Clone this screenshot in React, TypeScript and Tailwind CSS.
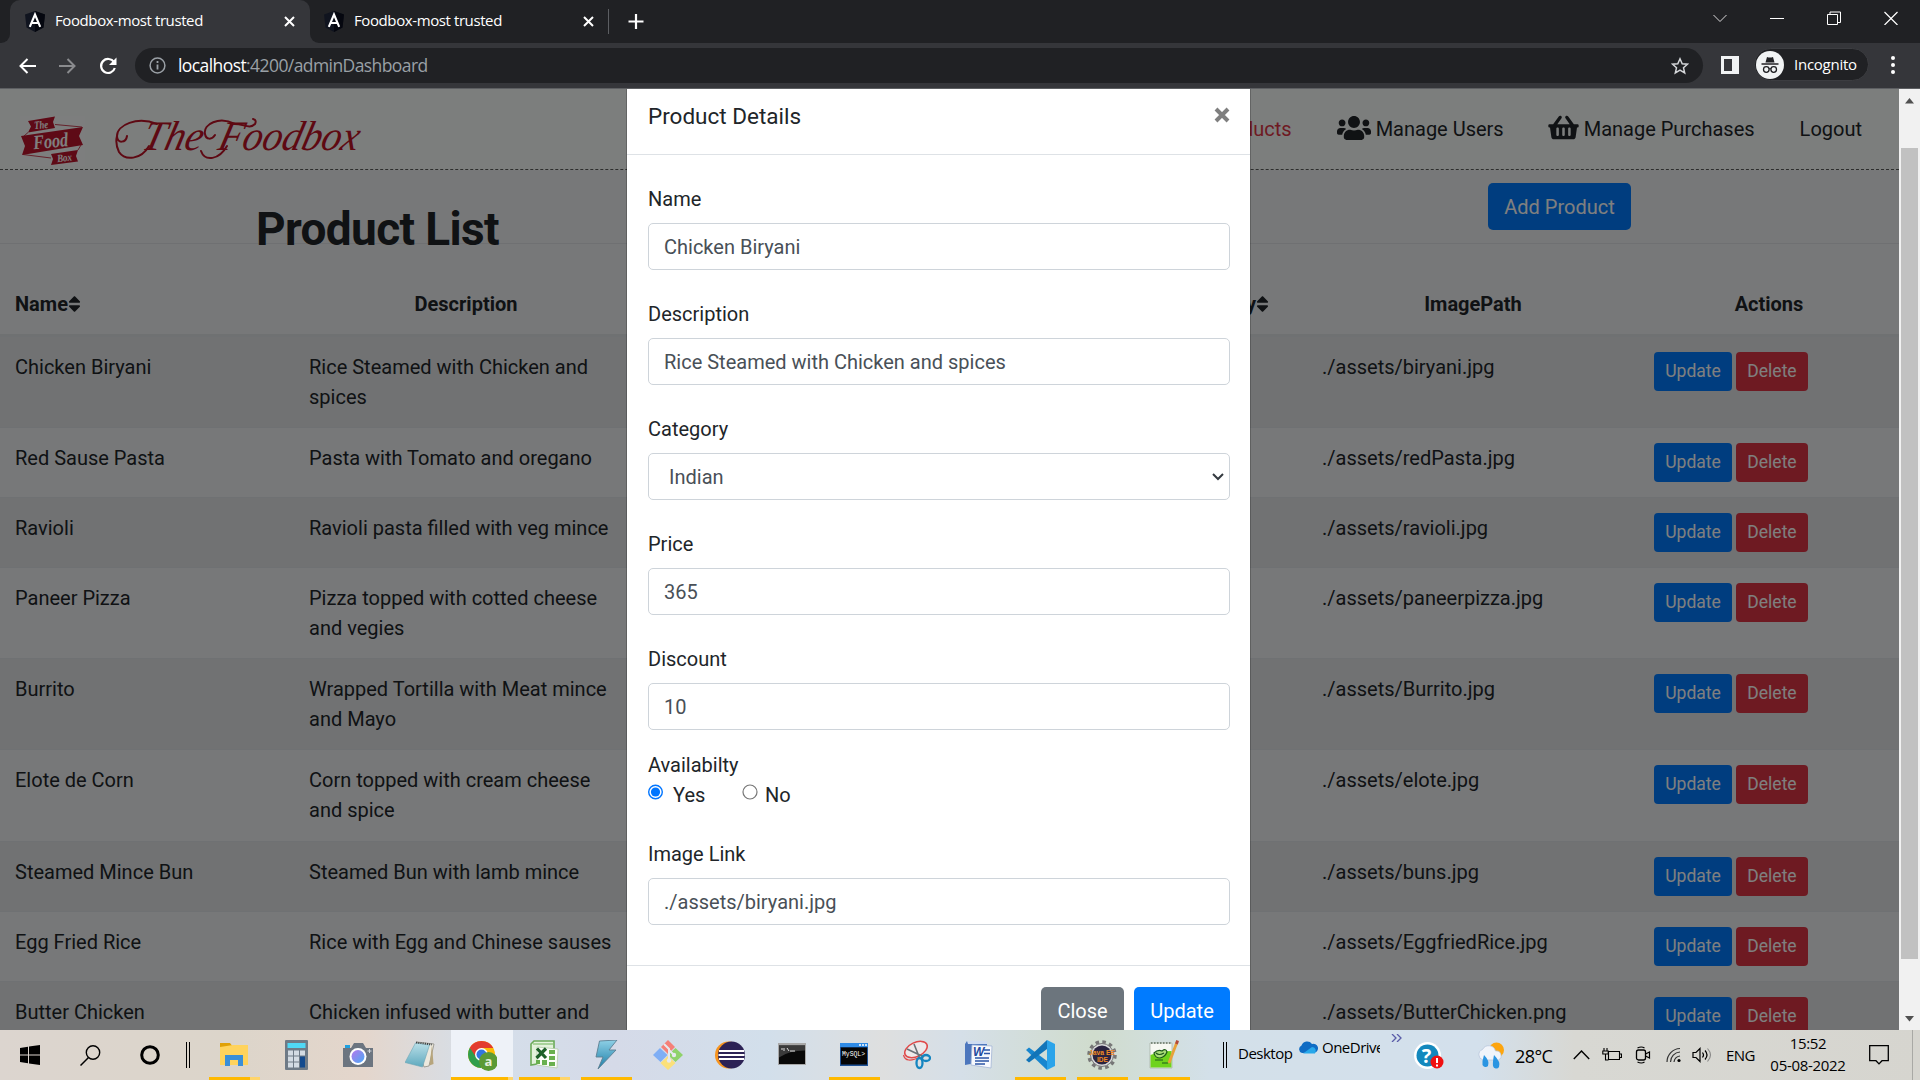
import React from "react";
import { FaUsers, FaShoppingBasket, FaSort } from "react-icons/fa";

const rows = [
  ["Chicken Biryani", "Rice Steamed with Chicken and spices", "./assets/biryani.jpg"],
  ["Red Sause Pasta", "Pasta with Tomato and oregano", "./assets/redPasta.jpg"],
  ["Ravioli", "Ravioli pasta filled with veg mince", "./assets/ravioli.jpg"],
  ["Paneer Pizza", "Pizza topped with cotted cheese and vegies", "./assets/paneerpizza.jpg"],
  ["Burrito", "Wrapped Tortilla with Meat mince and Mayo", "./assets/Burrito.jpg"],
  ["Elote de Corn", "Corn topped with cream cheese and spice", "./assets/elote.jpg"],
  ["Steamed Mince Bun", "Steamed Bun with lamb mince", "./assets/buns.jpg"],
  ["Egg Fried Rice", "Rice with Egg and Chinese sauses", "./assets/EggfriedRice.jpg"],
  ["Butter Chicken", "Chicken infused with butter and cream", "./assets/ButterChicken.png"],
];

function AngularIcon() {
  return (
    <svg width="20" height="21" viewBox="0 0 20 21" className="shrink-0">
      <path d="M10 0 20 3.5 18.5 16.5 10 21 1.500 16.500 0 3.500Z" fill="#10141f" />
      <path d="M10 0v21l8.500-4.500L20 3.500Z" fill="#05070f" />
      <path d="M4.800 15.800 10 3.500l5.200 12.300M6.800 12h6.400" stroke="#fff" strokeWidth="2.100" fill="none" />
    </svg>
  );
}

function CloseX() {
  return (
    <svg width="11" height="11" viewBox="0 0 11 11" className="shrink-0">
      <path d="M1 1l9 9M10 1l-9 9" stroke="#fff" strokeWidth="2" />
    </svg>
  );
}

function BrowserChrome() {
  return (
    <div className="h-[89px] shrink-0 bg-[#202124] text-white font-['Open_Sans',sans-serif]">
      <div className="flex h-[43px]">
        <div className="flex w-[10px] items-end bg-[#35363a]">
          <div className="h-full w-full rounded-br-[9px] bg-[#202124]" />
        </div>
        <div className="flex w-[300px] items-center rounded-t-[10px] bg-[#35363a] pb-px pl-[15px] pr-[15px]">
          <AngularIcon />
          <span className="-mt-[2px] ml-[10px] grow whitespace-nowrap text-[15px] tracking-[-0.4px]">Foodbox-most trusted</span>
          <CloseX />
        </div>
        <div className="flex w-[299px] bg-[#35363a]">
          <div className="flex w-full items-center rounded-bl-[9px] bg-[#202124] pb-px pl-[14px] pr-[15px]">
            <AngularIcon />
            <span className="-mt-[2px] ml-[10px] grow whitespace-nowrap text-[15px] tracking-[-0.4px]">Foodbox-most trusted</span>
            <CloseX />
            <div className="-mr-[15px] ml-[14px] h-[25px] w-px bg-[#5c5e62]" />
          </div>
        </div>
        <svg width="16" height="16" viewBox="0 0 16 16" className="ml-[19px] mt-[14px]">
          <path d="M8 0v15M.5 7.500h15" stroke="#fff" strokeWidth="2.200" />
        </svg>
        <div className="flex grow items-start justify-end gap-[43px] pr-[22px] pt-[11px]">
          <svg width="14" height="14" viewBox="0 0 14 14"><path d="M.5 4 7 10.500 13.500 4" stroke="#dadada" fill="none" /></svg>
          <svg width="14" height="14" viewBox="0 0 14 14"><path d="M0 7.500h14" stroke="#fff" /></svg>
          <svg width="14" height="15" viewBox="0 0 14 15"><path d="M.5 3.500h10v10H.500zM3 3.500V1h10.500v10.500H11" stroke="#fff" fill="none" /></svg>
          <svg width="14" height="14" viewBox="0 0 14 14"><path d="M.5 1l13 13M13.500 1l-13 13" stroke="#fff" strokeWidth="1.200" /></svg>
        </div>
      </div>
      <div className="flex h-[46px] items-start border-b border-[#5d5f62] bg-[#35363a] pt-[5px]">
        <div className="flex h-[35px] w-[135px] items-center pl-[19px]">
          <svg width="17" height="16" viewBox="0 0 17 16"><path d="M17 8H1.800M8.500 1 1.500 8l7 7" stroke="#fff" strokeWidth="2" fill="none" /></svg>
          <svg width="17" height="16" viewBox="0 0 17 16" className="ml-[23px]"><path d="M0 8h15.200M8.500 1l7 7-7 7" stroke="#8a8b8e" strokeWidth="2" fill="none" /></svg>
          <svg width="19" height="18" viewBox="0 0 19 18" className="ml-[23px]"><path d="M15 5.200A7 7 0 1 0 15.800 11" stroke="#fff" strokeWidth="2.200" fill="none" /><path d="M17.500 .5v7.500H10Z" fill="#fff" /></svg>
        </div>
        <div className="flex h-[35px] w-[1568px] items-center rounded-full bg-[#202124] pl-[14px] pr-[14px]">
          <svg width="17" height="17" viewBox="0 0 17 17"><circle cx="8.500" cy="8.500" r="7.400" stroke="#9aa0a6" strokeWidth="1.500" fill="none" /><path d="M8.500 7.500v5M8.500 4v2" stroke="#9aa0a6" strokeWidth="1.800" /></svg>
          <span className="ml-[12px] grow text-[17.5px] tracking-[-0.58px] text-[#9aa0a6]"><span className="text-white">localhost</span>:4200/adminDashboard</span>
          <svg width="18" height="18" viewBox="0 0 18 18"><path d="M9 1.800l2.200 4.900 5.300.5-4 3.600 1.200 5.200L9 13.200 4.300 16l1.200-5.200-4-3.600 5.300-.5Z" stroke="#d5d7da" strokeWidth="1.500" fill="none" /></svg>
        </div>
        <svg width="18" height="18" viewBox="0 0 18 18" className="ml-[18px] mt-[8px]"><path d="M0 0h18v18H0zM3 3v12h8V3z" fill="#f1f3f4" fillRule="evenodd" /></svg>
        <div className="ml-[15px] flex h-[33px] w-[115px] items-center rounded-full border border-[#3c3d41] bg-[#202124] pl-px">
          <svg width="28" height="28" viewBox="0 0 28 28">
            <circle cx="14" cy="14" r="14" fill="#f1f3f4" />
            <path d="M9.500 11.500 11 6q3 1 6 0l1.500 5.500Z" fill="#202124" />
            <path d="M5.500 13h17" stroke="#202124" strokeWidth="1.500" />
            <circle cx="10.300" cy="18.500" r="2.800" stroke="#202124" strokeWidth="1.300" fill="none" />
            <circle cx="17.700" cy="18.500" r="2.800" stroke="#202124" strokeWidth="1.300" fill="none" />
            <path d="M13 18q1-1 2 0" stroke="#202124" fill="none" />
          </svg>
          <span className="ml-[10px] text-[15px] tracking-[-0.25px]">Incognito</span>
        </div>
        <svg width="4" height="18" viewBox="0 0 4 18" className="ml-[22px] mt-[8px]"><circle cx="2" cy="2" r="2" fill="#fff" /><circle cx="2" cy="9" r="2" fill="#fff" /><circle cx="2" cy="16" r="2" fill="#fff" /></svg>
      </div>
    </div>
  );
}

function FoodBoxLogo() {
  return (
    <svg width="65" height="50" viewBox="0 0 65 50" className="block">
      <rect width="65" height="50" fill="#fff" fillOpacity=".35" />
      <path d="M8 5 35 .5l-2 5.500 2 6L8 16.500l3-6Z" fill="#bd142c" />
      <path d="M1 20 63 11l-4 9 4 9-61 10 3-9Z" fill="#bd142c" />
      <path d="M31 38l27-4-2 6 2 5.500L31 49l2-6Z" fill="#bd142c" />
      <path d="M35 8.500 62 11M8 16.500l-4 3.500M3 38.500l28 3.500M58 34l3-5" stroke="#bd142c" strokeWidth=".8" />
      <g fill="#fff" fontFamily="Liberation Serif" fontStyle="italic" fontWeight="bold">
        <text x="14" y="12.500" fontSize="11" textLength="14" lengthAdjust="spacingAndGlyphs" transform="rotate(-5 21 8)">The</text>
        <text x="13" y="31.500" fontSize="20" textLength="35" lengthAdjust="spacingAndGlyphs" transform="rotate(-5 32 24)">Food</text>
        <text x="37" y="45.500" fontSize="11" textLength="15" lengthAdjust="spacingAndGlyphs" transform="rotate(-6 44 42)">Box</text>
      </g>
    </svg>
  );
}

function Wordmark() {
  return (
    <svg width="254" height="60" viewBox="0 0 254 60" className="block overflow-visible">
      <g fill="#bd1226" fontFamily="Liberation Serif" fontStyle="italic">
        <text x="30" y="42" fontSize="42" textLength="60" lengthAdjust="spacingAndGlyphs" transform="skewX(-14) translate(6 0)">The</text>
        <text x="108" y="42" fontSize="42" textLength="140" lengthAdjust="spacingAndGlyphs" transform="skewX(-14) translate(4 0)">Foodbox</text>
      </g>
      <path d="M42 16C22 8 2 17 2 28c0 8 9 7 10 0M34 38C26 52 10 53 4 44Q0 36 2 28M120 16C104 8 88 16 90 26c1 6 7 6 10 1M112 38c-8 14-22 16-26 5M118 16c10-1 16 6 22 0q2-4-2-5" stroke="#bd1226" strokeWidth="2" fill="none" strokeLinecap="round" />
    </svg>
  );
}

function Navbar() {
  return (
    <div className="flex h-[81px] shrink-0 border-b border-dashed border-[#5a5c5a] bg-[#f9fcfa] pr-[37px] text-[20px] leading-[30px] text-[#212529]">
      <div className="pl-[20px] pt-[27px]"><FoodBoxLogo /></div>
      <div className="ml-[30px] pt-[19px]"><Wordmark /></div>
      <div className="flex h-[80px] grow items-center justify-end whitespace-nowrap">
        <span className="text-[#dc3545]">Manage Products</span>
        <span className="ml-[45px] flex items-center"><FaUsers className="mr-[5px] -mt-[3px] h-[28px] w-[34px]" />Manage Users</span>
        <span className="ml-[44px] flex items-center"><FaShoppingBasket className="mr-[5px] -mt-[3px] h-[27px] w-[31px]" />Manage Purchases</span>
        <span className="ml-[45px]">Logout</span>
      </div>
    </div>
  );
}

function ProductTable() {
  return (
    <table className="w-[1899px] table-fixed border-collapse text-left text-[20px] leading-[30px] text-[#212529]">
      <colgroup>
        <col className="w-[294px]" /><col className="w-[344px]" /><col className="w-[669px]" /><col className="w-[332px]" /><col className="w-[260px]" />
      </colgroup>
      <thead>
        <tr className="h-[90px] align-middle font-bold">
          <th className="px-[15px] pb-0 pt-[29px]"><span className="flex items-center">Name<FaSort className="h-[20px] w-[13px]" /></span></th>
          <th className="pt-[29px] text-center">Description</th>
          <th className="pt-[29px] pr-[38px]"><span className="flex items-center justify-end">Availability<FaSort className="h-[20px] w-[13px]" /></span></th>
          <th className="pt-[29px] text-center">ImagePath</th>
          <th className="pt-[29px] text-center">Actions</th>
        </tr>
      </thead>
      <tbody>
        <tr className="h-[2px] bg-[#dfe2e5]"><td colSpan={5} /></tr>
        {rows.map((r, i) => (
          <tr key={r[0]} className={i % 2 === 0 ? "bg-black/5 align-top" : "align-top"}>
            <td className="border-t border-[#dee2e6] p-[15px]">{r[0]}</td>
            <td className={i === 5 ? "border-t border-[#dee2e6] p-[15px] pb-[16px]" : "border-t border-[#dee2e6] p-[15px]"}>{r[1]}</td>
            <td className="border-t border-[#dee2e6] p-[15px]" />
            <td className="border-t border-[#dee2e6] p-[15px]">{r[2]}</td>
            <td className="border-t border-[#dee2e6] p-[15px]">
              <div className="flex gap-[4px] text-[17.5px] leading-[26px] text-white">
                <button className="h-[39px] w-[78px] rounded-[4px] bg-[#007bff]">Update</button>
                <button className="h-[39px] w-[72px] rounded-[4px] bg-[#dc3545]">Delete</button>
              </div>
            </td>
          </tr>
        ))}
      </tbody>
    </table>
  );
}

function Field({ label, value, select }: { label: string; value: string; select?: boolean }) {
  return (
    <div className="mb-[29px]">
      <div className="mb-[9px] h-[30px] text-[#212529]">{label}</div>
      <div className={select ? "flex h-[47px] items-center justify-between rounded-[5px] border border-[#ced4da] pl-[20px] pr-[5px] text-[#495057]" : "flex h-[47px] items-center rounded-[5px] border border-[#ced4da] px-[15px] text-[#495057]"}>
        {value}
        {select && <svg width="12" height="8" viewBox="0 0 12 8"><path d="M1 1l5 5 5-5" stroke="#343a40" strokeWidth="2" fill="none" /></svg>}
      </div>
    </div>
  );
}

function ProductModal() {
  return (
    <div className="w-[625px] border-x border-black/20 bg-white bg-clip-padding text-[20px] leading-[30px] text-[#212529]">
      <div className="flex h-[66px] justify-between border-b border-[#dee2e6] pl-[21px] pr-[20px] pt-[8px]">
        <span className="text-[22.5px] leading-[38px]">Product Details</span>
        <svg width="16" height="16" viewBox="0 0 16 16" className="mt-[10px]"><path d="M2 2l12 12M14 2 2 14" stroke="#7f7f7f" strokeWidth="4" /></svg>
      </div>
      <div className="pl-[21px] pr-[20px] pt-[29px]">
        <Field label="Name" value="Chicken Biryani" />
        <Field label="Description" value="Rice Steamed with Chicken and spices" />
        <Field label="Category" value="Indian" select />
        <Field label="Price" value="365" />
        <Field label="Discount" value="10" />
        <div className="-mt-[9px] h-[30px]">Availabilty</div>
        <div className="mb-[29px] flex h-[30px]">
          <svg width="16" height="16" viewBox="0 0 16 16" className="mt-[4px]"><circle cx="7.500" cy="8" r="6.800" stroke="#0075ff" strokeWidth="1.400" fill="#fff" /><circle cx="7.500" cy="8" r="4.600" fill="#0075ff" /></svg>
          <span className="ml-[9px] w-[69px]">Yes</span>
          <svg width="16" height="16" viewBox="0 0 16 16" className="mt-[4px]"><circle cx="8" cy="8" r="7" stroke="#767676" strokeWidth="1.200" fill="#fff" /></svg>
          <span className="ml-[7px]">No</span>
        </div>
        <Field label="Image Link" value="./assets/biryani.jpg" />
      </div>
      <div className="mt-[40px] flex justify-end gap-[10px] border-t border-[#dee2e6] pr-[20px] pt-[21px] text-white">
        <button className="h-[47px] w-[83px] rounded-[5px] bg-[#6c757d]">Close</button>
        <button className="h-[47px] w-[96px] rounded-[5px] bg-[#007bff]">Update</button>
      </div>
    </div>
  );
}

const icons: { w: string; el: React.ReactNode }[] = [
  { w: "split", el: <><path d="M1 3h10l3 4H1z" fill="#e0a106" /><path d="M1 7 14 5h15v20H1z" fill="#ffd35c" /><path d="M6 26V15h18v11h-5v-6h-8v6z" fill="#3a8fd8" /></> },
  { w: "", el: <><rect x="4" width="23" height="30" rx="1" fill="#6e7a86" /><path d="M6.500 3h18v5h-18z" fill="#4fd8f5" /><path d="M7 10.500h5v5H7zM13 10.500h5v5h-5zM19 10.500h5v5h-5zM7 16.500h5v5H7zM13 16.500h5v5h-5zM7 22.500h5v5H7zM13 22.500h5v5h-5z" fill="#d3dbe3" /><path d="M19 16.500h5v11h-5z" fill="#134a8e" /></> },
  { w: "", el: <><path d="M0 8h8l3-5h9l3 5h7v19H0z" fill="#6c7580" /><path d="M2 5h5v3H2z" fill="#1fa0e0" /><path d="M26.500 9v4M24.500 11h4" stroke="#d0d5da" /><circle cx="15" cy="16.500" r="8.500" fill="#fff" /><circle cx="15" cy="16.500" r="6.500" fill="url(#lens)" /></> },
  { w: "", el: <><path d="M12 2 29 4l-5 22-5 1z" fill="#ece9de" stroke="#8f8d84" strokeWidth=".8" /><path d="M27 5l1.500 19-4 1.500z" fill="#b7a57c" /><path d="M10.500 3 24.500 5 17.500 27 0 22.500z" fill="url(#sheet)" stroke="#6ea6b6" strokeWidth=".6" /><path d="M11 2.500l16 2" stroke="#3f4447" strokeWidth="1.800" strokeDasharray="1.200 1" /></> },
  { w: "active", el: <><circle cx="14.500" cy="14.500" r="13.500" fill="#fbbc05" /><path d="M2.800 7.800A13.500 13.500 0 0 0 14 28L20 17.500 14.500 14.500Z" fill="#2f9e4c" /><path d="M14.500 8h11.800A13.500 13.500 0 0 0 2.800 7.800L9 17Z" fill="#e33b2e" /><circle cx="14.500" cy="14.500" r="6.500" fill="#fff" /><circle cx="14.500" cy="14.500" r="5" fill="#3376e0" /><circle cx="21.500" cy="21.500" r="9.500" fill="#5b9a35" /><text x="21.500" y="26" fill="#e6f0dc" fontSize="13" fontWeight="bold" fontFamily="Open Sans" textAnchor="middle">a</text></> },
  { w: "split", el: <><path d="M5 1h20v20L2 25V4z" fill="#e3f2dc" stroke="#6bab58" strokeWidth="1.600" /><path d="M4 4h20" stroke="#a8d29a" strokeWidth="2" /><path d="M8 7 29 9 28 28 8 25z" fill="#fbfdf9" stroke="#b4cdaa" strokeWidth=".8" /><path d="M20 10h6v4h-6zM20 16h6v4h-6zM20 22h6v4h-6zM13 20h5v5h-5zM7 20h4v4H7z" fill="#69b04e" /><path d="M8 8.500l9 9.500M17 8.500 7.500 18" stroke="#1c5f28" strokeWidth="3.200" /></> },
  { w: "full", el: <path d="M8.500 1 26 0 18 10h7L7 29l5-12H5z" fill="url(#bolt)" stroke="#5c7f92" strokeWidth=".9" /> },
  { w: "", el: <><path d="M15 0l7 7-7 7-7-7z" fill="#f58078" /><path d="M7 8 14.500 15 7.500 22 0 15z" fill="#7faef5" /><path d="M22.500 8l7.500 7-7.500 7-7.500-7z" fill="#8fd26a" /><path d="M15 16l7.500 7-7.500 7-7.500-7z" fill="#fbe07a" /><path d="M11 4l5 5v11M16 10l5 5" stroke="#e6e9ee" strokeWidth="2" fill="none" /><circle cx="16" cy="20.500" r="2.200" fill="#e6e9ee" /><circle cx="21" cy="15" r="2.200" fill="#e6e9ee" /></> },
  { w: "", el: <><circle cx="13.500" cy="15" r="13.500" fill="#f7941e" /><circle cx="16.500" cy="15" r="13.500" fill="#2c2255" /><path d="M4 11h25M3.500 15h26M4 19h25" stroke="#fff" strokeWidth="2" /></> },
  { w: "", el: <><path d="M1 3h28v22H1z" fill="#a8a8a8" /><path d="M2 5.500h26v18.500H2z" fill="#080808" /><path d="M2 5.500h26v5q-16 0-26 7z" fill="#3a3a3a" /><path d="M4 9h2M7 8v3M10 8l2 3M13 11h5" stroke="#ddd" /></> },
  { w: "full", el: <><path d="M1 3h28v23H1z" fill="#1f5296" /><path d="M1 3h28v4H1z" fill="#2f8be6" /><path d="M20 5h2M23 5h2M26 5h2" stroke="#fff" strokeWidth="1.400" /><path d="M2 7.500h26v17H2z" fill="#050505" /><text x="3" y="16" fill="#fff" fontSize="8" fontFamily="Liberation Mono" textLength="23" lengthAdjust="spacingAndGlyphs">MySQL&gt;</text></> },
  { w: "", el: <><ellipse cx="15" cy="9.500" rx="12" ry="7" transform="rotate(-25 15 9.500)" fill="#f5ecec" fillOpacity=".7" stroke="#e04a4a" strokeWidth="1.500" /><path d="M2.500 15q2 9 17 2" stroke="#e04a4a" strokeWidth="1.200" fill="none" /><path d="M13 4l6 15M6 9l17 8" stroke="#6b7177" strokeWidth="1.600" /><ellipse cx="18.500" cy="23" rx="3" ry="5" fill="none" stroke="#1585c0" strokeWidth="2.300" /><ellipse cx="25" cy="18" rx="4" ry="3" fill="none" stroke="#1585c0" strokeWidth="2.300" /></> },
  { w: "", el: <><path d="M4 1h20v20L2 25V4z" fill="#4c76bd" /><path d="M4 1h20v3H5z" fill="#cfdcf0" /><path d="M9 5 29 6 28 28 8 25z" fill="#f7f9fd" stroke="#a3b5d6" strokeWidth=".8" /><path d="M21 10h6M21 13.500h6M12 18h14M12 21h14M12 24h10" stroke="#2c55a5" strokeWidth="1.600" /><text x="10" y="16" fill="#1f4a9e" fontWeight="bold" fontSize="12" fontFamily="Liberation Sans" fontStyle="italic">W</text></> },
  { w: "full", el: <><path d="M1 10l3-2.500L22 21v9z" fill="#1886cf" /><path d="M1 20 22 0v9L4 22.500z" fill="#1274b8" /><path d="M22 0 30 4v22l-8 4z" fill="#2ba4ea" /></> },
  { w: "full", el: <><circle cx="15" cy="15" r="13" fill="none" stroke="#777" strokeWidth="3.500" strokeDasharray="3.500 3.300" /><circle cx="15" cy="15" r="11.500" fill="#d8d8d8" stroke="#777" /><circle cx="15" cy="15" r="9.500" fill="#2a2340" /><text x="2" y="15" fill="#f08a24" fontSize="7.500" fontWeight="bold" fontFamily="Liberation Sans" textLength="26" lengthAdjust="spacingAndGlyphs">Java EE</text><text x="10" y="22" fill="#f08a24" fontSize="7.500" fontWeight="bold" fontFamily="Liberation Sans" textLength="11" lengthAdjust="spacingAndGlyphs">IDE</text></> },
  { w: "full", el: <><path d="M1 3h22v25H1z" fill="#f6f8f2" stroke="#a9b3a9" strokeWidth=".8" /><path d="M1.500 15q10-4 21-4v16.500h-21z" fill="#6fd31c" /><path d="M5 13q4-4 8-2 4-3 5 1-2 5-7 6-5 0-6-5z" fill="#a9dc78" stroke="#1d5a1a" strokeWidth="1.200" /><path d="M7 13q3 3 8 0M6 20h8M13 23h6" stroke="#1d5a1a" strokeWidth="1.200" fill="none" /><path d="M2 3h20" stroke="#7d8a7d" strokeWidth="2" strokeDasharray="1.500 1.500" /><path d="M28 2 20 23" stroke="#e8a13a" strokeWidth="2.800" /><path d="M28.600.500 27.500 4" stroke="#b5493a" strokeWidth="2.800" /></> },
];

function TaskSlot({ w, el }: { w: string; el: React.ReactNode }) {
  return (
    <div className={w === "active" ? "flex h-[50px] w-[62px] flex-col items-center bg-[#eef2f8] pt-[10px]" : "flex h-[50px] w-[62px] flex-col items-center pt-[10px]"}>
      <svg width="30" height="31" viewBox="0 0 30 31" className="block">
        <defs>
          <linearGradient id="lens" x1="0" y1="0" x2="1" y2="1"><stop offset="0" stopColor="#b678ec" /><stop offset="1" stopColor="#49a9f5" /></linearGradient>
          <linearGradient id="sheet" x1="0" y1="0" x2="0" y2="1"><stop offset="0" stopColor="#b9dfe8" /><stop offset="1" stopColor="#5fa9be" /></linearGradient>
          <linearGradient id="bolt" x1="0" y1="0" x2="0" y2="1"><stop offset="0" stopColor="#8fd0e6" /><stop offset="1" stopColor="#1b7ea8" /></linearGradient>
        </defs>
        {el}
      </svg>
      <div className="mt-[6px] flex h-[3px]">
        {w === "full" && <div className="w-[51px] bg-[#ffb900]" />}
        {w === "split" && <><div className="w-[41px] bg-[#ffb900]" /><div className="w-[10px] bg-[#ffd56b]" /></>}
        {w === "active" && <><div className="w-[57px] bg-[#ffb900]" /><div className="w-[5px] bg-[#ffd56b]" /></>}
      </div>
    </div>
  );
}

function Taskbar() {
  return (
    <div className="flex h-[50px] shrink-0 overflow-hidden whitespace-nowrap bg-[linear-gradient(90deg,#dcd5cf_0%,#dcd5ca_12%,#e4d6cc_19%,#d5dfea_25%,#d5dae8_32%,#d2dfeb_40%,#dedfdf_46%,#d5dfe8_50%,#d0dccd_57%,#d3e0e9_63%,#d3e0ec_77%,#d8d8d3_82%,#d6d5cf_100%)] text-[15px] text-black font-['Open_Sans',sans-serif]">
      <div className="flex w-[205px] items-center pl-[20px]">
        <svg width="20" height="20" viewBox="0 0 20 20"><path d="M0 3l8-1.200V9.500H0zM9 1.600 20 0v9.500H9zM0 10.500h8v7.700L0 17zM9 10.500h11V20L9 18.400z" /></svg>
        <svg width="21" height="21" viewBox="0 0 21 21" className="ml-[40px]"><circle cx="13" cy="7.500" r="6.700" fill="none" stroke="#000" strokeWidth="1.400" /><path d="M8.500 12.500.500 20.500" stroke="#000" strokeWidth="1.500" /></svg>
        <svg width="20" height="20" viewBox="0 0 20 20" className="ml-[39px]"><circle cx="10" cy="10" r="8.300" fill="none" stroke="#000" strokeWidth="3" /></svg>
        <div className="ml-[26px] h-[26px] w-[4px] border-x border-black" />
      </div>
      <div className="flex w-[1018px] shrink-0">
        <div className="-ml-[2px] flex">{icons.map((t, i) => <TaskSlot key={i} w={t.w} el={t.el} />)}</div>
      </div>
      <div className="mt-[12px] h-[26px] w-[4px] shrink-0 border-x border-black" />
      <span className="ml-[11px] mt-[13px] w-[60px] text-[15px] leading-[20px] tracking-[-0.5px]">Desktop</span>
      <svg width="20" height="14" viewBox="0 0 20 14" className="mt-[10px] shrink-0"><path d="M4 13a4 4 0 0 1-.5-7.500A6 6 0 0 1 14 4a4.500 4.500 0 0 1 3 8.500z" fill="#0f6cc4" /><path d="M5 13.500 14 7a4 4 0 0 1 3 6.500z" fill="#28a8ea" /></svg>
      <span className="ml-[4px] mt-[7px] w-[58px] overflow-hidden leading-[20px] tracking-[-0.5px]">OneDrive</span>
      <svg width="11" height="8" viewBox="0 0 11 8" className="ml-[11px] mt-[4px] shrink-0"><path d="M1 0l4 4-4 4M6 0l4 4-4 4" stroke="#5a5ca8" strokeWidth="1.300" fill="none" /></svg>
      <svg width="30" height="28" viewBox="0 0 30 28" className="ml-[12px] mt-[12px] shrink-0"><circle cx="13.500" cy="13.500" r="13.500" fill="#fff" /><circle cx="13.500" cy="13.500" r="11" fill="#1388bd" /><text x="12.500" y="21" fontSize="20" fontWeight="bold" fill="#fff" textAnchor="middle" fontFamily="Open Sans">?</text><circle cx="23" cy="20" r="6.500" fill="#f01010" /><path d="M23 16v5M23 22.500v2" stroke="#fff" strokeWidth="2" /></svg>
      <svg width="28" height="28" viewBox="0 0 28 28" className="ml-[33px] mt-[12px] shrink-0"><circle cx="19.500" cy="8" r="7.500" fill="#fda50f" /><path d="M6 18a5.500 5.500 0 0 1-.5-10.500 7 7 0 0 1 13 1.500 4.800 4.800 0 0 1 3 9z" fill="#f1f4fa" stroke="#b9c6dc" strokeWidth=".8" /><path d="M7 13q6 6 4 11a3.300 3.300 0 0 1-5.500-1q-.5-4 1.500-10M17 13q7 7 5 12a3.300 3.300 0 0 1-6-1q-.5-4 1-11" fill="#2a95e2" /></svg>
      <span className="ml-[10px] mt-[13px] w-[58px] text-[18px] leading-[26px] tracking-[-0.6px]">28°C</span>
      <svg width="17" height="10" viewBox="0 0 17 10" className="mt-[20px] shrink-0"><path d="M.8 9 8.500 1l7.700 8" stroke="#000" strokeWidth="1.400" fill="none" /></svg>
      <svg width="20" height="14" viewBox="0 0 20 14" className="ml-[12px] mt-[18px] shrink-0"><path d="M6.500 3.500h11v8h-11zM18 6h1.500v3.500H18M2 0v3M5 0v3M.8 3h5.400v3H.8zM3.500 6v6h3" stroke="#000" strokeWidth="1.100" fill="none" /></svg>
      <svg width="16" height="18" viewBox="0 0 16 18" className="ml-[13px] mt-[16px] shrink-0"><rect x="1.500" y="4" width="9" height="10" rx="2" stroke="#000" strokeWidth="1.300" fill="none" /><path d="M10.500 8l4-2v6l-4-2M2.500 2q4-2 7 0M2.500 16q4 2 7 0" stroke="#000" strokeWidth="1.200" fill="none" /></svg>
      <svg width="17" height="16" viewBox="0 0 17 16" className="ml-[14px] mt-[17px] shrink-0"><circle cx="14" cy="13.500" r="1.600" /><path d="M9 15a7 7 0 0 1 6-6M5.500 15A10 10 0 0 1 15 5M2 15A13.500 13.500 0 0 1 15 1.500" stroke="#333" strokeWidth="1.200" fill="none" /></svg>
      <svg width="20" height="16" viewBox="0 0 20 16" className="ml-[10px] mt-[17px] shrink-0"><path d="M1 5.500h3l4-4v13l-4-4H1zM10.500 5.500q2 2.500 0 5M13 3.500q4 4.500 0 9" stroke="#000" strokeWidth="1.200" fill="none" /><path d="M15.500 1.500q6 6.500 0 13" stroke="#888" strokeWidth="1.100" fill="none" /></svg>
      <span className="ml-[14px] mt-[15px] w-[30px] leading-[20px] tracking-[-0.6px]">ENG</span>
      <div className="ml-[12px] mt-[2px] w-[80px] text-center leading-[22px] tracking-[-0.3px]"><div>15:52</div><div>05-08-2022</div></div>
      <svg width="20" height="20" viewBox="0 0 20 20" className="ml-[21px] mt-[15px] shrink-0"><path d="M.7.700h18.600v15H13l-3 3.200-3-3.200H.7z" stroke="#000" strokeWidth="1.300" fill="none" /></svg>
      <div className="ml-[23px] h-full w-px shrink-0 bg-[#a9a9a5]" />
    </div>
  );
}

export default function App() {
  return (
    <div className="flex h-[1080px] w-[1920px] flex-col overflow-hidden font-['Roboto',sans-serif]">
      <BrowserChrome />
      <div className="flex h-[941px] shrink-0">
        <div className="relative h-full w-[1899px] overflow-hidden bg-[#eff1f3]">
          <Navbar />
          <div className="flex h-[74px] items-start border-b border-[#dfe1e5] pl-[256px] pr-[268px] text-[#212529]">
            <h1 className="grow pt-[29px] text-[46px] font-bold leading-[60px] tracking-[-0.65px]">Product List</h1>
            <button className="mt-[13px] h-[47px] w-[143px] rounded-[5px] bg-[#007bff] text-[20px] text-white">Add Product</button>
          </div>
          <ProductTable />
          <div className="absolute inset-0 flex justify-center bg-black/50">
            <div className="-ml-[22px]"><ProductModal /></div>
          </div>
        </div>
        <div className="flex w-[21px] flex-col items-center bg-[#f1f1f1]">
          <svg width="9" height="6" viewBox="0 0 9 6" className="mt-[9px]"><path d="M0 5.500 4.500 0 9 5.500z" fill="#505050" /></svg>
          <div className="mt-[44px] h-[811px] w-[17px] bg-[#c1c1c1]" />
          <svg width="9" height="6" viewBox="0 0 9 6" className="mt-[57px]"><path d="M0 0h9L4.500 5.500z" fill="#505050" /></svg>
        </div>
      </div>
      <Taskbar />
    </div>
  );
}
